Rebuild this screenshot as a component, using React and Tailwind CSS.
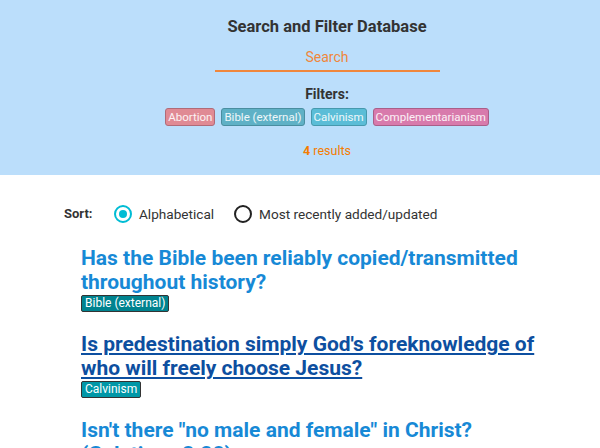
const filters = [
  { name: "Abortion", cls: "bg-[#e08a94] border-[#b06b78]" },
  { name: "Bible (external)", cls: "bg-[#5fb1c6] border-[#4a8ea0]" },
  { name: "Calvinism", cls: "bg-[#5bbdd7] border-[#4799ad]" },
  { name: "Complementarianism", cls: "bg-[#d87aac] border-[#a95f88]" },
];

const results = [
  {
    title: "Has the Bible been reliably copied/transmitted throughout history?",
    tag: "Bible (external)",
    tagCls: "bg-[#00838f]",
  },
  {
    title: "Is predestination simply God's foreknowledge of who will freely choose Jesus?",
    tag: "Calvinism",
    tagCls: "bg-[#0097a7]",
    active: true,
  },
  {
    title: 'Isn\'t there "no male and female" in Christ? (Galatians 3:28)',
    tag: "Complementarianism",
    tagCls: "bg-[#ad1457]",
  },
];

function Radio({ checked, label }) {
  return (
    <label className="flex items-center gap-[7px]">
      <span
        className={`flex h-[18px] w-[18px] items-center justify-center rounded-full border-2 ${
          checked ? "border-[#00bcd4]" : "border-[#222]"
        }`}
      >
        {checked ? <span className="h-[8px] w-[8px] rounded-full bg-[#00bcd4]" /> : null}
      </span>
      <span className="text-[13.6px] text-[#333]">{label}</span>
    </label>
  );
}

export default function App() {
  return (
    <div className="h-[448px] overflow-hidden bg-white font-['Roboto',sans-serif]">
      <header className="flex h-[175px] flex-col items-center bg-[#bbdefb] pl-[54px] pt-[17px]">
        <h1 className="text-[16.5px] font-bold leading-[20px] text-[#333]">Search and Filter Database</h1>
        <div className="mt-[10px] w-[225px] border-b-2 border-[#f0873c] pb-[3px] text-center text-[14px] leading-[20px] text-[#f0873c]">
          Search
        </div>
        <p className="mt-[13px] text-[14px] font-bold leading-[18px] text-[#333]">Filters:</p>
        <div className="mt-[5px] flex gap-[6px]">
          {filters.map((f) => (
            <span
              key={f.name}
              className={`rounded-[3px] border px-[2px] text-[11.5px] leading-[16px] text-white/90 ${f.cls}`}
            >
              {f.name}
            </span>
          ))}
        </div>
        <p className="mt-[17px] text-[12.5px] leading-[16px] text-[#f57c00]">
          <b>4</b> results
        </p>
      </header>

      <main className="pt-[29px]">
        <div className="flex items-center pl-[64px]">
          <span className="w-[50px] text-[13px] font-bold text-[#333]">Sort:</span>
          <div className="flex items-center gap-[20px]">
            <Radio checked label="Alphabetical" />
            <Radio label="Most recently added/updated" />
          </div>
        </div>

        <div className="mt-[22px] flex w-[551px] flex-col gap-[20px] pl-[81px]">
          {results.map((r) => (
            <article key={r.title}>
              <a
                href="#"
                className={`block text-[21px] font-bold leading-[24px] ${
                  r.active ? "text-[#0d4fa0] underline underline-offset-2" : "text-[#1789d6]"
                }`}
              >
                {r.title}
              </a>
              <span
                className={`mt-[1px] block w-fit rounded-[2px] border border-[#333] px-[3px] text-[12px] leading-[15px] text-white ${r.tagCls}`}
              >
                {r.tag}
              </span>
            </article>
          ))}
        </div>
      </main>
    </div>
  );
}
